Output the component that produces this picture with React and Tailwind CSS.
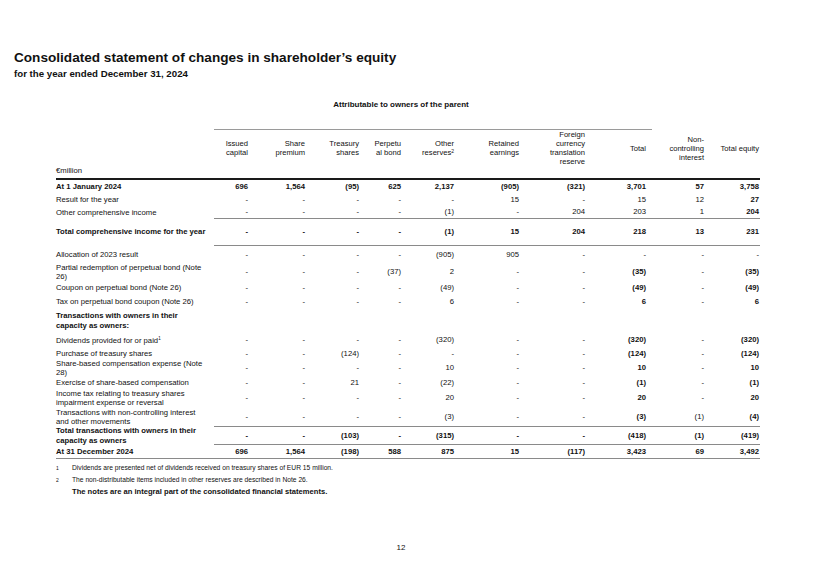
import React from "react";

const cols = [
  "w-[42px]",
  "w-[57px]",
  "w-[54px]",
  "w-[42px]",
  "w-[53px]",
  "w-[65px]",
  "w-[66px]",
  "w-[61px]",
  "w-[58px]",
  "w-[55px]",
];

const headers = [
  ["Issued", "capital"],
  ["Share", "premium"],
  ["Treasury", "shares"],
  ["Perpetu", "al bond"],
  ["Other", "reserves²"],
  ["Retained", "earnings"],
  ["Foreign", "currency", "translation", "reserve"],
  ["Total"],
  ["Non-", "controlling", "interest"],
  ["Total equity"],
];

function Row({ h, label, vals, bold = false, boldCols = [7, 9], labelBold = false }) {
  const lb = bold || labelBold;
  return (
    <div className={`flex items-center ${h}`}>
      <div className={`w-[150px] shrink-0 ${lb ? "font-bold leading-[10px]" : "leading-[9px]"}`}>
        {label.map((l, i) => (
          <div key={i} className="whitespace-nowrap">
            {l}
          </div>
        ))}
      </div>
      {vals &&
        vals.map((v, i) => (
          <div
            key={i}
            className={`${cols[i]} shrink-0 text-right whitespace-nowrap ${
              bold || boldCols.includes(i) ? "font-bold" : ""
            }`}
          >
            {v}
          </div>
        ))}
    </div>
  );
}

const Line = () => <div className="ml-[158px] h-px bg-[#8a8a8a]" />;

export default function App() {
  return (
    <div className="w-[820px] h-[580px] bg-white text-[#111] font-['Liberation_Sans',Arial,sans-serif] overflow-hidden">
      <div className="pt-[50px] pl-[14px]">
        <div className="text-[13.6px] leading-[16px] font-bold">
          Consolidated statement of changes in shareholder’s equity
        </div>
        <div className="mt-[2px] text-[9.7px] leading-[11px] font-bold">
          for the year ended December 31, 2024
        </div>
      </div>

      <div className="mt-[21px] text-center text-[8px] leading-[10px] font-bold w-[802px]">
        Attributable to owners of the parent
      </div>

      <div className="pl-[56px] text-[7.7px]">
        <div className="mt-[19px] ml-[158px] w-[438px] h-px bg-[#9a9a9a]" />
        <div className="flex items-center h-[36px] text-[7.6px] leading-[9px]">
          <div className="w-[150px] shrink-0" />
          {headers.map((hd, i) => (
            <div key={i} className={`${cols[i]} shrink-0 text-right`}>
              {hd.map((t, j) => (
                <div key={j} className="whitespace-nowrap">
                  {t.endsWith("²") ? (
                    <>
                      {t.slice(0, -1)}
                      <sup className="text-[5px]">2</sup>
                    </>
                  ) : (
                    t
                  )}
                </div>
              ))}
            </div>
          ))}
        </div>
        <div className="h-[10px] leading-[10px]">€million</div>
        <div className="mt-[2px] w-[704px] h-[2px] bg-[#1a1a1a]" />

        <div className="w-[704px]">
          <Row h="h-[13px]" bold label={["At 1 January 2024"]} vals={["696", "1,564", "(95)", "625", "2,137", "(905)", "(321)", "3,701", "57", "3,758"]} />
          <Row h="h-[13px]" boldCols={[9]} label={["Result for the year"]} vals={["-", "-", "-", "-", "-", "15", "-", "15", "12", "27"]} />
          <Row h="h-[12px]" boldCols={[9]} label={["Other comprehensive income"]} vals={["-", "-", "-", "-", "(1)", "-", "204", "203", "1", "204"]} />
          <Line />
          <Row h="h-[26px]" bold label={["Total comprehensive income for the year"]} vals={["-", "-", "-", "-", "(1)", "15", "204", "218", "13", "231"]} />
          <Line />
          <Row h="h-[17px]" boldCols={[]} label={["Allocation of 2023 result"]} vals={["-", "-", "-", "-", "(905)", "905", "-", "-", "-", "-"]} />
          <Row h="h-[17px]" label={["Partial redemption of perpetual bond (Note", "26)"]} vals={["-", "-", "-", "(37)", "2", "-", "-", "(35)", "-", "(35)"]} />
          <Row h="h-[15px]" label={["Coupon on perpetual bond (Note 26)"]} vals={["-", "-", "-", "-", "(49)", "-", "-", "(49)", "-", "(49)"]} />
          <Row h="h-[13px]" label={["Tax on perpetual bond coupon (Note 26)"]} vals={["-", "-", "-", "-", "6", "-", "-", "6", "-", "6"]} />
          <Row h="h-[25px]" labelBold label={["Transactions with owners in their", "capacity as owners:"]} />
          <Row
            h="h-[14px]"
            label={[
              <>
                Dividends provided for or paid<sup className="text-[4.5px]">1</sup>
              </>,
            ]}
            vals={["-", "-", "-", "-", "(320)", "-", "-", "(320)", "-", "(320)"]}
          />
          <Row h="h-[13px]" label={["Purchase of treasury shares"]} vals={["-", "-", "(124)", "-", "-", "-", "-", "(124)", "-", "(124)"]} />
          <Row h="h-[16px]" label={["Share-based compensation expense (Note", "28)"]} vals={["-", "-", "-", "-", "10", "-", "-", "10", "-", "10"]} />
          <Row h="h-[13px]" label={["Exercise of share-based compensation"]} vals={["-", "-", "21", "-", "(22)", "-", "-", "(1)", "-", "(1)"]} />
          <Row h="h-[18px]" label={["Income tax relating to treasury shares", "impairment expense or reversal"]} vals={["-", "-", "-", "-", "20", "-", "-", "20", "-", "20"]} />
          <Row h="h-[19px]" label={["Transactions with non-controlling interest", "and other movements"]} vals={["-", "-", "-", "-", "(3)", "-", "-", "(3)", "(1)", "(4)"]} />
          <Line />
          <Row h="h-[17px]" bold label={["Total transactions with owners in their", "capacity as owners"]} vals={["-", "-", "(103)", "-", "(315)", "-", "-", "(418)", "(1)", "(419)"]} />
          <Line />
          <Row h="h-[13px]" bold label={["At 31 December 2024"]} vals={["696", "1,564", "(198)", "588", "875", "15", "(117)", "3,423", "69", "3,492"]} />
          <div className="h-px bg-[#8a8a8a]" />
        </div>

        <div className="mt-[4px] flex text-[6.7px] leading-[10px]">
          <div className="w-[16px] text-[5px]">1</div>
          <div>Dividends are presented net of dividends received on treasury shares of EUR 15 million.</div>
        </div>
        <div className="mt-[2px] flex text-[6.7px] leading-[10px]">
          <div className="w-[16px] text-[5px]">2</div>
          <div>The non-distributable items included in other reserves are described in Note 26.</div>
        </div>
        <div className="mt-[2px] pl-[16px] text-[7.6px] leading-[10px] font-bold">
          The notes are an integral part of the consolidated financial statements.
        </div>
      </div>

      <div className="mt-[46px] w-[802px] text-center text-[8px] leading-[10px]">12</div>
    </div>
  );
}
